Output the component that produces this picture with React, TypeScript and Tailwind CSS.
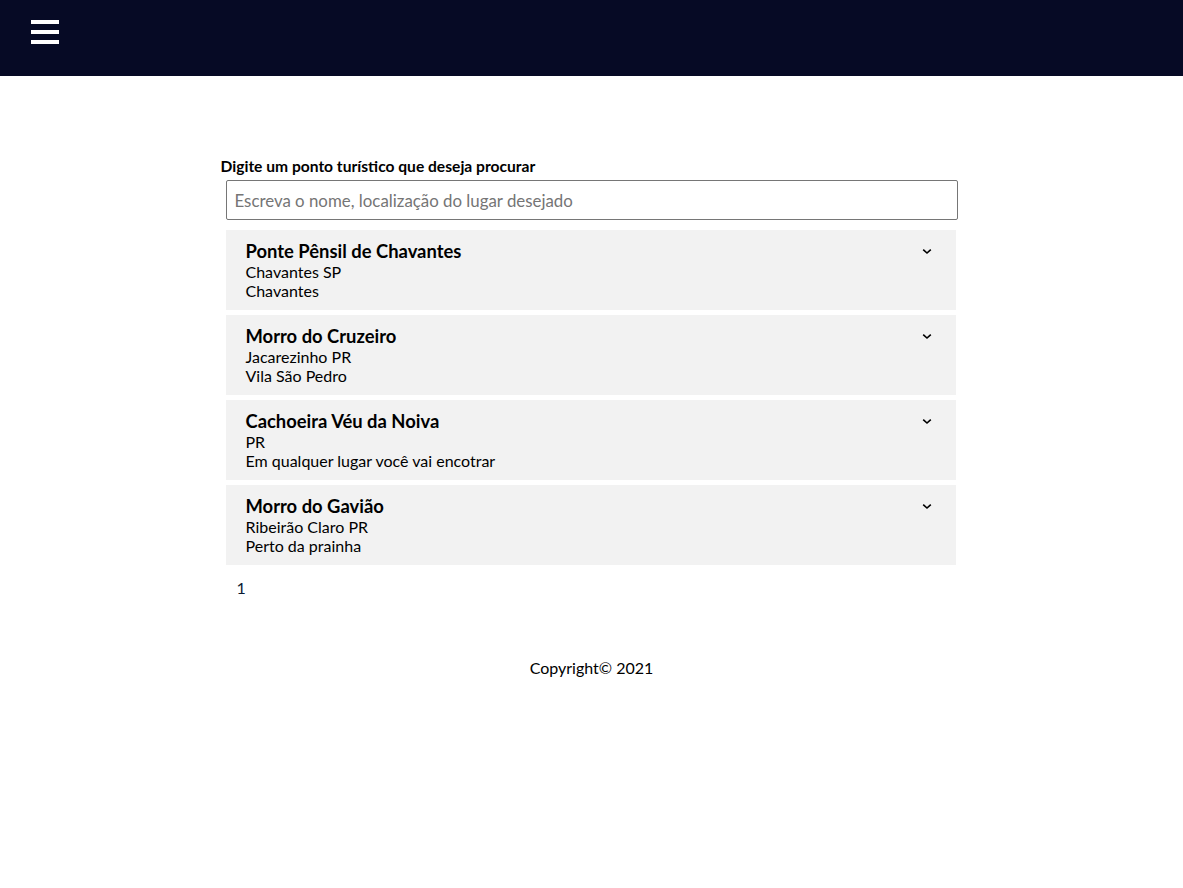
const places = [
  { name: 'Ponte Pênsil de Chavantes', city: 'Chavantes SP', desc: 'Chavantes' },
  { name: 'Morro do Cruzeiro', city: 'Jacarezinho PR', desc: 'Vila São Pedro' },
  { name: 'Cachoeira Véu da Noiva', city: 'PR', desc: 'Em qualquer lugar você vai encotrar' },
  { name: 'Morro do Gavião', city: 'Ribeirão Claro PR', desc: 'Perto da prainha' },
];

function Chevron() {
  return (
    <svg width="10" height="7" viewBox="0 0 10 7" className="mt-[8px] mr-[24px]">
      <path d="M1.2 1.6 L5 5 L8.8 1.6" fill="none" stroke="#000" strokeWidth="1.6" />
    </svg>
  );
}

export default function App() {
  return (
    <div className="min-h-[888px] bg-white font-['Lato','Liberation_Sans',sans-serif] text-black">
      <header className="h-[76px] bg-[#060a25] pl-[31px] pt-[20px]">
        <button type="button" className="flex flex-col gap-[6px]">
          <span className="block h-[4px] w-[28px] bg-white" />
          <span className="block h-[4px] w-[28px] bg-white" />
          <span className="block h-[4px] w-[28px] bg-white" />
        </button>
      </header>

      <main className="mx-auto w-[742px] pt-[80px]">
        <label className="block text-[15.6px] font-bold leading-[20px]">
          Digite um ponto turístico que deseja procurar
        </label>
        <input
          type="text"
          placeholder="Escreva o nome, localização do lugar desejado"
          className="mt-[4px] ml-[5px] block h-[40px] w-[732px] rounded-[2px] border border-[#767676] px-[8px] text-[16.85px] placeholder:text-[#757575] outline-none"
        />

        <div className="mt-[10px] ml-[5px] flex w-[730px] flex-col gap-[5px]">
          {places.map((p) => (
            <div key={p.name} className="flex h-[80px] justify-between bg-[#f2f2f2] pl-[20px] pt-[10px]">
              <div>
                <h3 className="text-[18.4px] font-bold leading-[22px]">{p.name}</h3>
                <p className="text-[16px] leading-[19px]">{p.city}</p>
                <p className="text-[16px] leading-[19px]">{p.desc}</p>
              </div>
              <Chevron />
            </div>
          ))}
        </div>

        <div className="mt-[13px] pl-[16px] text-[16px] leading-[20px] text-[#0a1a33]">1</div>
      </main>

      <footer className="pt-[60px] text-center text-[16px] leading-[20px]">Copyright© 2021</footer>
    </div>
  );
}
